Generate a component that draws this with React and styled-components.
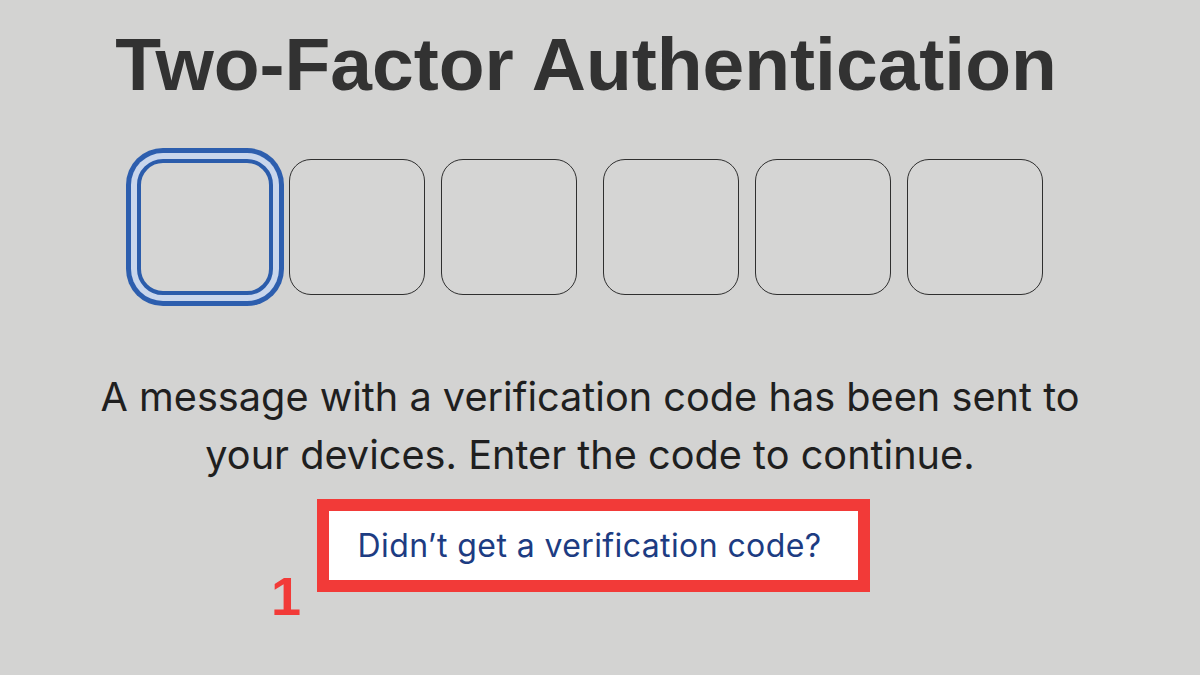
import React from "react";
import styled, { createGlobalStyle } from "styled-components";

const Global = createGlobalStyle`
  html, body { margin: 0; padding: 0; }
  body {
    width: 1200px;
    height: 675px;
    overflow: hidden;
    background: #d3d3d2;
  }
`;

const Page = styled.main`
  width: 1200px;
  height: 675px;
  box-sizing: border-box;
  padding: 21px 20px 0 0;
  display: flex;
  flex-direction: column;
  align-items: center;
  background: #d3d3d2;
`;

const Title = styled.h1`
  margin: 0 0 0 -8px;
  font-family: "Liberation Sans", Arial, sans-serif;
  font-weight: 700;
  font-size: 75px;
  line-height: 86px;
  color: #323232;
  letter-spacing: 0;
`;

const CodeRow = styled.div`
  margin-top: 52px;
  display: flex;
  gap: 16px;
`;

const Group = styled.div`
  display: flex;
  gap: 16px;
`;

const Split = styled.div`
  display: flex;
  gap: 26px;
`;

const Digit = styled.div`
  width: 136px;
  height: 136px;
  box-sizing: border-box;
  border-radius: ${(p) => (p.$focused ? "26px" : "22px")};
  border: ${(p) => (p.$focused ? "4px solid #2b5cab" : "1.8px solid #2f2f2f")};
  background: #d5d5d4;
  box-shadow: ${(p) =>
    p.$focused ? "0 0 0 6px #c9d6ec, 0 0 0 11px #2d5eae" : "none"};
`;

const Message = styled.p`
  margin: 73px 0 0;
  font-family: Inter, "Noto Sans", sans-serif;
  font-weight: 400;
  font-size: 39.7px;
  line-height: 58px;
  color: #1f1f1f;
  text-align: center;
`;

const Annotated = styled.div`
  position: relative;
  margin-top: 15px;
  margin-left: 7px;
`;

const Highlight = styled.div`
  width: 553px;
  height: 93px;
  box-sizing: border-box;
  border: 12px solid #f23a38;
  background: #ffffff;
  display: flex;
  align-items: center;
  justify-content: center;
`;

const Link = styled.a`
  font-family: Inter, "Noto Sans", sans-serif;
  font-size: 32px;
  letter-spacing: 0.4px;
  line-height: 69px;
  color: #1d3c82;
  text-decoration: none;
  margin-right: 8px;
`;

const StepNumber = styled.span`
  position: absolute;
  left: -46px;
  top: 70px;
  font-family: "Liberation Sans", Arial, sans-serif;
  font-weight: 700;
  font-size: 54px;
  line-height: 1;
  color: #f23a38;
`;

export default function App() {
  return (
    <>
      <Global />
      <Page>
        <Title>Two-Factor Authentication</Title>
        <CodeRow>
          <Split>
            <Group>
              <Digit $focused />
              <Digit />
              <Digit />
            </Group>
            <Group>
              <Digit />
              <Digit />
              <Digit />
            </Group>
          </Split>
        </CodeRow>
        <Message>
          A message with a verification code has been sent to
          <br />
          your devices. Enter the code to continue.
        </Message>
        <Annotated>
          <Highlight>
            <Link href="#">Didn’t get a verification code?</Link>
          </Highlight>
          <StepNumber>1</StepNumber>
        </Annotated>
      </Page>
    </>
  );
}
